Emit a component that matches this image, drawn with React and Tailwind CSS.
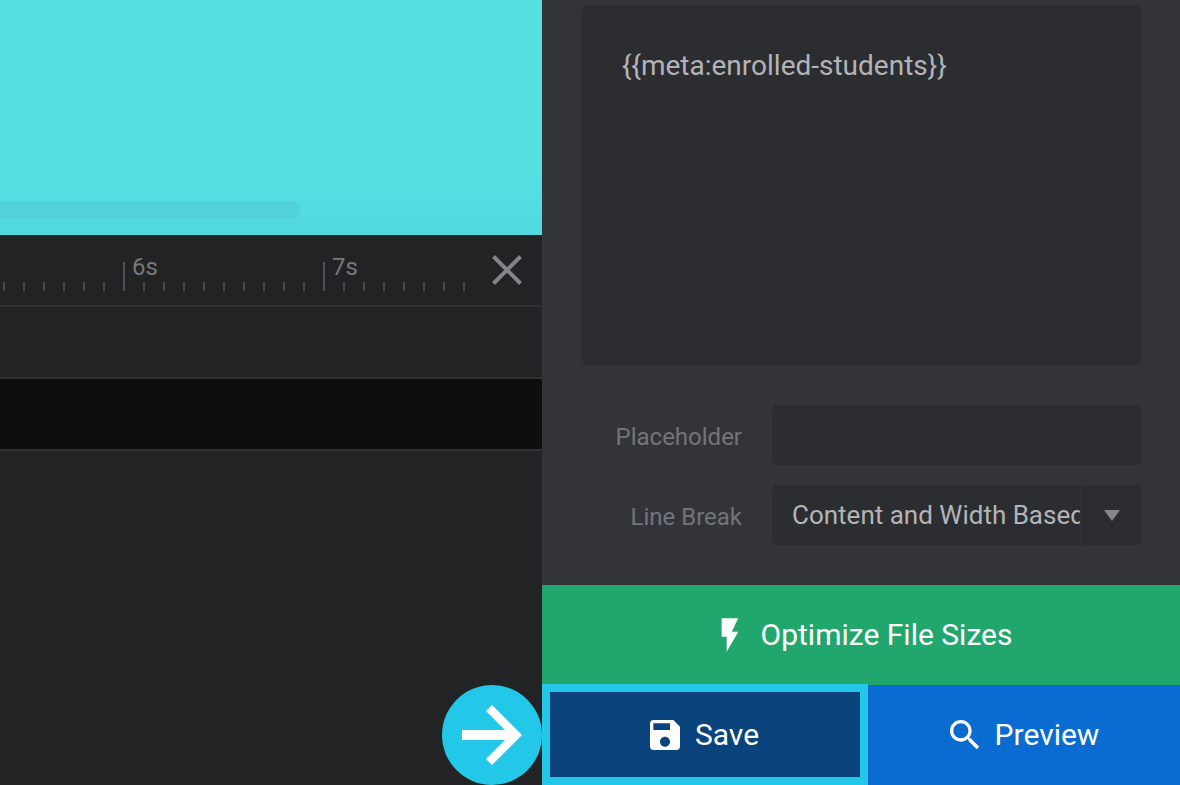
const SECONDS = [
  { label: '5s', ticks: 10 },
  { label: '6s', ticks: 10 },
  { label: '7s', ticks: 8 },
]

function RulerSecond({ label, ticks }) {
  return (
    <div className="relative flex flex-none w-[200px] h-[29px] items-end">
      {Array.from({ length: ticks }).map((_, i) => (
        <div key={i} className="w-[20px] flex-none">
          <div className={`w-[2px] ml-[-1px] ${i === 0 ? 'h-[29px] bg-[#505154]' : 'h-[9px] bg-[#48494c]'}`} />
        </div>
      ))}
      <span className="absolute left-[8px] top-[-9px] text-[24px] leading-[28px] text-[#77787c]">{label}</span>
    </div>
  )
}

function FieldRow({ label, children }) {
  return (
    <div className="flex items-center h-[60px]">
      <span className="w-[160px] flex-none pt-[4px] text-right text-[24px] leading-[32px] text-[#737479]">{label}</span>
      <div className="ml-[30px] w-[370px] h-[60px]">{children}</div>
    </div>
  )
}

export default function App() {
  return (
    <div className="relative flex w-[1180px] h-[785px] overflow-hidden bg-[#222325] font-['Roboto',sans-serif]">
      {/* timeline side */}
      <div className="w-[542px] flex-none flex flex-col">
        <div className="h-[235px] flex items-end pb-[16px] bg-gradient-to-b from-[#56dfe0] from-75% to-[#50dae0]">
          <div className="w-[300px] h-[18px] rounded-r-full bg-[#50d2d8]" />
        </div>
        <div className="h-[72px] flex items-start justify-between overflow-hidden border-b-2 border-[#313234]">
          <div className="flex ml-[-76px] mt-[27px]">
            {SECONDS.map((s) => <RulerSecond key={s.label} label={s.label} ticks={s.ticks} />)}
          </div>
        </div>
        <div className="h-[72px] border-b-2 border-[#313234]" />
        <div className="h-[72px] bg-[#0e0e0e] border-b-2 border-[#313234]" />
      </div>

      {/* settings side */}
      <div className="flex-1 flex flex-col bg-[#33343a]">
        <div className="flex-1 flex flex-col px-[40px] pt-[5px]">
          <div className="h-[360px] rounded-[5px] bg-[#2c2d31] px-[40px] pt-[42px] text-[28px] leading-[38px] text-[#b3b4b8]">
            {'{{meta:enrolled-students}}'}
          </div>
          <div className="mt-[40px] flex flex-col gap-[20px]">
            <FieldRow label="Placeholder">
              <div className="h-full rounded-[5px] bg-[#2c2d31]" />
            </FieldRow>
            <FieldRow label="Line Break">
              <div className="h-full flex rounded-l-[5px] bg-[#2c2d31]">
                <div className="w-[308px] flex-none pl-[20px] overflow-hidden whitespace-nowrap text-[26px] leading-[60px] text-[#b3b4b8]">
                  Content and Width Based
                </div>
                <div className="flex-1 flex items-center justify-center border-l border-[#333438]">
                  <svg width="16" height="11" viewBox="0 0 16 11"><path d="M0 0h16l-8 11z" fill="#85868a" /></svg>
                </div>
              </div>
            </FieldRow>
          </div>
        </div>

        <button className="h-[100px] flex-none flex items-center justify-center gap-[20px] pl-[8px] bg-[#21a76d] text-[30px] text-white">
          <svg width="40" height="40" viewBox="0 0 24 24" className="ml-[-10px] mr-[-9px]" fill="currentColor">
            <path d="M7 2v11h3v9l7-12h-4l4-8z" />
          </svg>
          <span className="mb-[2px]">Optimize File Sizes</span>
        </button>
        <div className="h-[100px] flex-none flex">
          <button className="w-[326px] h-[101px] mt-[-1px] flex-none flex items-center justify-center gap-[10px] pt-[1px] pr-[6px] border-[8px] border-[#23c8e8] bg-[#0b437c] text-[30px] text-white">
            <svg width="40" height="40" viewBox="0 0 24 24" fill="currentColor">
              <path d="M17 3H5c-1.11 0-2 .9-2 2v14c0 1.1.89 2 2 2h14c1.1 0 2-.9 2-2V7l-4-4zm-5 16c-1.66 0-3-1.34-3-3s1.34-3 3-3 3 1.34 3 3-1.34 3-3 3zm3-10H5V5h10v4z" />
            </svg>
            <span className="mb-[1px]">Save</span>
          </button>
          <button className="flex-1 flex items-center justify-center gap-[10px] pr-[6px] bg-[#0a6bd1] text-[30px] text-white">
            <svg width="40" height="40" viewBox="0 0 24 24" fill="currentColor">
              <path d="M15.5 14h-.79l-.28-.27C15.41 12.59 16 11.11 16 9.5 16 5.91 13.09 3 9.5 3S3 5.91 3 9.5 5.91 16 9.5 16c1.61 0 3.09-.59 4.23-1.57l.27.28v.79l5 4.99L20.49 19l-4.99-5zm-6 0C7.01 14 5 11.99 5 9.5S7.01 5 9.5 5 14 7.01 14 9.5 11.99 14 9.5 14z" />
            </svg>
            <span className="mb-[2px]">Preview</span>
          </button>
        </div>
      </div>

      {/* overlays */}
      <button className="absolute left-[492px] top-[255px] text-[#84858a]">
        <svg width="30" height="30" viewBox="0 0 30 30" className="block" stroke="currentColor" strokeWidth="4" fill="none">
          <path d="M1.5 1.5l27 27M28.5 1.5l-27 27" />
        </svg>
      </button>
      <div className="absolute left-[442px] top-[685px] w-[100px] h-[100px] rounded-full bg-[#23c8e8] flex items-center justify-center">
        <svg width="60" height="60" viewBox="0 0 60 60" fill="#fff">
          <path d="M30 0L60 30 30 60 24 54 43 35H0V25H43L24 6z" />
        </svg>
      </div>
    </div>
  )
}
